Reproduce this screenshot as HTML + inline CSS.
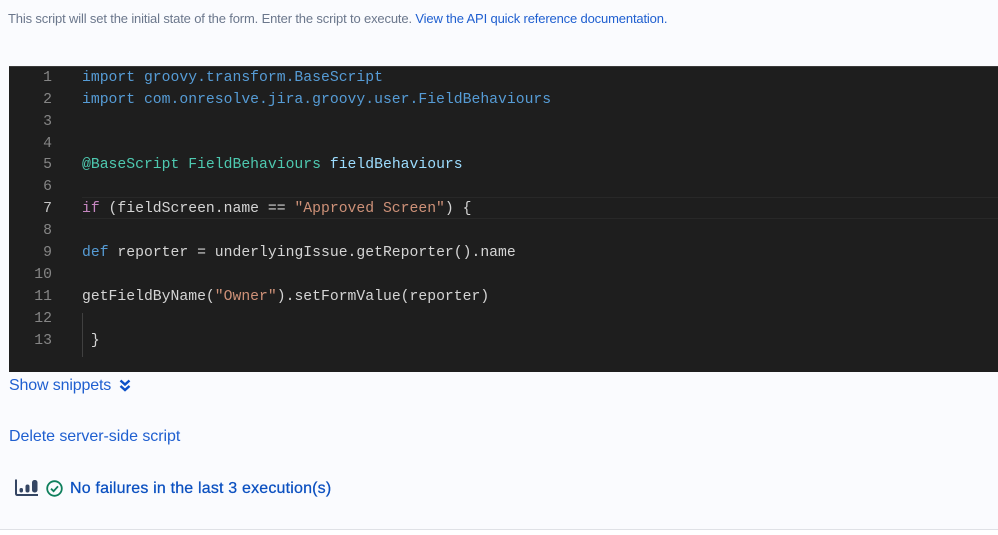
<!DOCTYPE html>
<html><head><meta charset="utf-8"><style>
html,body{margin:0;padding:0;width:998px;height:535px;overflow:hidden;background:#fafbfe}
body{position:relative;font-family:"Liberation Sans",sans-serif}
.t{position:absolute;white-space:pre;line-height:20px}
a{color:#1f5fd0;text-decoration:none}
#ed{position:absolute;left:9px;top:66px;width:989px;height:306px;background:#1e1e1e;border-top:1px solid #3a3a3a;box-sizing:border-box}
.c,.n{position:absolute;white-space:pre;font-family:"Liberation Mono",monospace;font-size:14.75px;line-height:22px;height:22px;color:#d4d4d4}
.n{left:0;width:43px;text-align:right;color:#858585}
.c{left:73px}
.k{color:#569cd6}.g{color:#4ec9b0}.v{color:#9cdcfe}.s{color:#ce9178}.p{color:#c586c0}
</style></head><body>
<div class="t" style="left:8px;top:9px;font-size:13px;letter-spacing:-0.153px;color:#6b778c">This script will set the initial state of the form. Enter the script to execute. <a href="#">View the API quick reference documentation.</a></div>
<div id="ed">
<div style="position:absolute;left:73px;right:0;top:130px;height:22px;border-top:1px solid #282828;border-bottom:1px solid #282828;box-sizing:border-box"></div>
<div style="position:absolute;left:73px;top:246px;width:1px;height:44px;background:#404040"></div>
<div class="n" style="top:0">1</div><div class="c k" style="top:0">import groovy.transform.BaseScript</div>
<div class="n" style="top:22px">2</div><div class="c k" style="top:22px">import com.onresolve.jira.groovy.user.FieldBehaviours</div>
<div class="n" style="top:44px">3</div>
<div class="n" style="top:66px">4</div>
<div class="n" style="top:87px">5</div><div class="c" style="top:87px"><span class="g">@BaseScript FieldBehaviours</span> <span class="v">fieldBehaviours</span></div>
<div class="n" style="top:109px">6</div>
<div class="n" style="top:131px;color:#c6c6c6">7</div><div class="c" style="top:131px"><span class="p">if</span> (fieldScreen.name == <span class="s">"Approved Screen"</span>) {</div>
<div class="n" style="top:153px">8</div>
<div class="n" style="top:175px">9</div><div class="c" style="top:175px"><span class="k">def</span> reporter = underlyingIssue.getReporter().name</div>
<div class="n" style="top:197px">10</div>
<div class="n" style="top:219px">11</div><div class="c" style="top:219px">getFieldByName(<span class="s">"Owner"</span>).setFormValue(reporter)</div>
<div class="n" style="top:241px">12</div>
<div class="n" style="top:263px">13</div><div class="c" style="top:263px"> }</div>
</div>
<div class="t" style="left:9px;top:376px;font-size:16px;letter-spacing:-0.15px"><a href="#">Show snippets</a></div>
<svg style="position:absolute;left:119px;top:379px" width="12" height="13" viewBox="0 0 12 13"><path d="M1.5 1.5L6 5.5L10.5 1.5M1.5 7L6 11L10.5 7" fill="none" stroke="#0b50c8" stroke-width="2.4"/></svg>
<div class="t" style="left:9px;top:427px;font-size:16px;letter-spacing:-0.05px"><a href="#">Delete server-side script</a></div>
<svg style="position:absolute;left:15px;top:479px" width="24" height="18" viewBox="0 0 24 18"><path d="M1 0.5V14.5Q1 16 2.5 16H23" fill="none" stroke="#344563" stroke-width="2"/><rect x="4.5" y="9" width="3.5" height="4.5" rx="1.7" fill="#344563"/><rect x="10.5" y="5.5" width="4" height="8" rx="2" fill="#344563"/><rect x="17" y="1" width="5.5" height="12.5" rx="2.5" fill="#344563"/></svg>
<svg style="position:absolute;left:46px;top:479.5px" width="17" height="17" viewBox="0 0 17 17"><circle cx="8.5" cy="8.5" r="7.3" fill="none" stroke="#0e7f5c" stroke-width="1.8"/><path d="M5 8.7L7.6 11.2L12 6.3" fill="none" stroke="#0e7f5c" stroke-width="1.8"/></svg>
<div class="t" style="left:70px;top:479px;font-size:16px;letter-spacing:0.185px;-webkit-text-stroke:0.25px #0b50c0"><a href="#" style="color:#0b50c0">No failures in the last 3 execution(s)</a></div>
<div style="position:absolute;left:0;top:529px;width:998px;height:1px;background:#dfe1e6"></div>
<div style="position:absolute;left:0;top:530px;width:998px;height:5px;background:#fff"></div>
</body></html>
